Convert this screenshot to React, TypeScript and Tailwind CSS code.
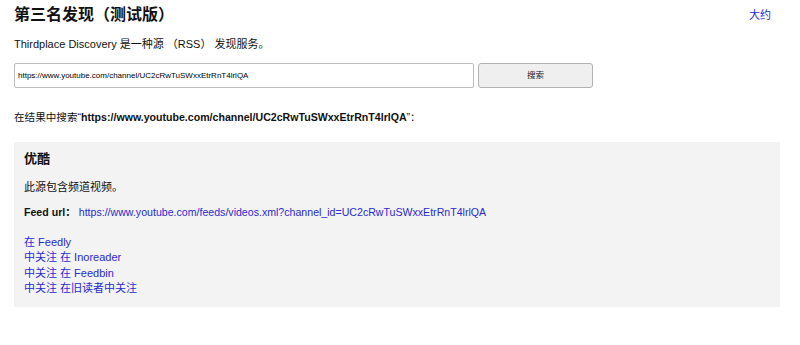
import React from 'react';

const url = 'https://www.youtube.com/channel/UC2cRwTuSWxxEtrRnT4lrlQA';
const feed = 'https://www.youtube.com/feeds/videos.xml?channel_id=UC2cRwTuSWxxEtrRnT4lrlQA';

const links = ['在 Feedly', '中关注 在 Inoreader', '中关注 在 Feedbin', '中关注 在旧读者中关注'];

export default function App() {
  return (
    <div
      className="w-[800px] h-[345px] bg-white text-[#111] pl-[14px] pr-[20px]"
      style={{ fontFamily: '"Liberation Sans", Arial, "Noto Sans CJK SC", sans-serif' }}
    >
      <header className="flex justify-between items-start pt-[5px]">
        <h1 className="text-[16px] leading-[20px] font-bold">第三名发现（测试版）</h1>
        <a href="#" className="text-[11px] leading-[14px] mt-[3px] mr-[9px] text-[#2a2ad2]">
          大约
        </a>
      </header>

      <p className="text-[11px] leading-[14px] mt-[12px]">
        Thirdplace Discovery 是一种源 （RSS） 发现服务。
      </p>

      <form className="flex gap-[4px] mt-[12px]" onSubmit={(e) => e.preventDefault()}>
        <input
          defaultValue={url}
          className="w-[460px] h-[25px] border border-[#bdbdbd] rounded-[2px] px-[3px] text-[8px] text-black outline-none"
        />
        <button
          type="submit"
          className="w-[115px] h-[25px] border border-[#b3b3b3] rounded-[3px] bg-[#efefef] text-[8.5px] text-[#222]"
        >
          搜索
        </button>
      </form>

      <p className="text-[10.6px] leading-[14px] mt-[22px]">
        在结果中搜索“<strong className="font-bold">{url}</strong>”：
      </p>

      <section className="bg-[#f3f3f3] mt-[18px] h-[165px] px-[10px] pt-[9px]">
        <h2 className="text-[13px] leading-[16px] font-bold">优酷</h2>
        <p className="text-[11px] leading-[14px] mt-[13px]">此源包含频道视频。</p>
        <p className="text-[10.6px] leading-[14px] mt-[11px]">
          <span className="font-bold">Feed url：</span>{' '}
          <a href="#" className="text-[#2a2ad2]">{feed}</a>
        </p>
        <ul className="mt-[16px] text-[11px] leading-[15.3px]">
          {links.map((l) => (
            <li key={l}>
              <a href="#" className="text-[#2a2ad2]">{l}</a>
            </li>
          ))}
        </ul>
      </section>
    </div>
  );
}
